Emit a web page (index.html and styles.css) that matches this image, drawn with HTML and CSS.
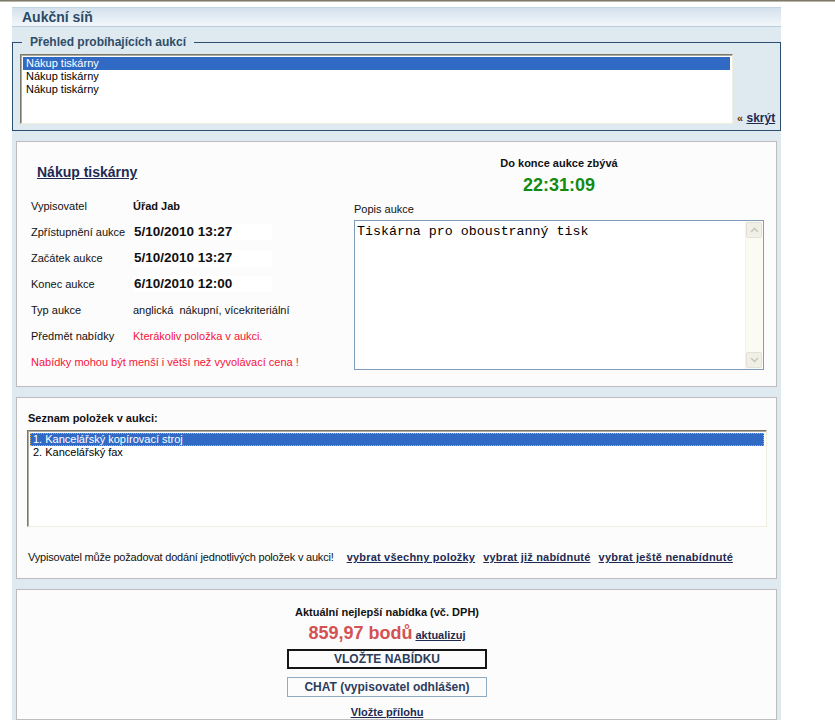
FILE: index.html
```html
<!DOCTYPE html>
<html lang="cs">
<head>
<meta charset="utf-8">
<title>Aukční síň</title>
<link rel="stylesheet" href="styles.css">
</head>
<body>
<div class="topline"></div>
<div class="page">
  <div class="header">Aukční síň</div>

  <fieldset class="overview">
    <legend>Přehled probíhajících aukcí</legend>
    <div class="overview-row">
      <div class="listbox auctions">
        <div class="item selected">Nákup tiskárny</div>
        <div class="item">Nákup tiskárny</div>
        <div class="item">Nákup tiskárny</div>
      </div>
      <div class="hide"><span class="raquo">«</span> <a href="#">skrýt</a></div>
    </div>
  </fieldset>

  <div class="panel detail">
    <div class="left">
      <a class="title" href="#">Nákup tiskárny</a>
      <div class="rows">
        <div class="row"><span class="label">Vypisovatel</span><span class="val strong">Úřad Jab</span></div>
        <div class="row"><span class="label">Zpřístupnění aukce</span><span class="val date">5/10/2010 13:27</span></div>
        <div class="row"><span class="label">Začátek aukce</span><span class="val date">5/10/2010 13:27</span></div>
        <div class="row"><span class="label">Konec aukce</span><span class="val date">6/10/2010 12:00</span></div>
        <div class="row"><span class="label">Typ aukce</span><span class="val">anglická&nbsp; nákupní, vícekriteriální</span></div>
        <div class="row"><span class="label">Předmět nabídky</span><span class="val red">Kterákoliv položka v aukci.</span></div>
        <div class="row red">Nabídky mohou být menší i větší než vyvolávací cena !</div>
      </div>
    </div>
    <div class="right">
      <div class="remain">Do konce aukce zbývá</div>
      <div class="countdown">22:31:09</div>
      <div class="popis">Popis aukce</div>
      <div class="textarea">
        <div class="ta-text">Tiskárna pro oboustranný tisk</div>
        <div class="scrollbar">
          <div class="sb-btn"><svg width="9" height="6" viewBox="0 0 9 6"><path d="M1 5 L4.5 1.5 L8 5" fill="none" stroke="#c9c9bd" stroke-width="1.6"/></svg></div>
          <div class="sb-track"></div>
          <div class="sb-btn"><svg width="9" height="6" viewBox="0 0 9 6"><path d="M1 1 L4.5 4.5 L8 1" fill="none" stroke="#c9c9bd" stroke-width="1.6"/></svg></div>
        </div>
      </div>
    </div>
  </div>

  <div class="panel items">
    <div class="items-head">Seznam položek v aukci:</div>
    <div class="listbox itemlist">
      <div class="item selected focus">1. Kancelářský kopírovací stroj</div>
      <div class="item">2. Kancelářský fax</div>
    </div>
    <div class="items-links">
      <span class="note">Vypisovatel může požadovat dodání jednotlivých položek v aukci!</span>
      <a href="#" class="first">vybrat všechny položky</a>
      <a href="#">vybrat již nabídnuté</a>
      <a href="#">vybrat ještě nenabídnuté</a>
    </div>
  </div>

  <div class="panel bid">
    <div class="bid-inner">
      <div class="best">Aktuální nejlepší nabídka (vč. DPH)</div>
      <div class="price"><span class="amount">859,97 bodů</span> <a href="#" class="refresh">aktualizuj</a></div>
      <div class="btn btn-main">VLOŽTE NABÍDKU</div>
      <div class="btn btn-chat">CHAT (vypisovatel odhlášen)</div>
      <a href="#" class="attach">Vložte přílohu</a>
    </div>
  </div>
</div>
</body>
</html>
```

FILE: styles.css
```css
html, body {
  margin: 0;
  padding: 0;
  background: #ffffff;
  font-family: "Liberation Sans", Arial, sans-serif;
  font-size: 11px;
  color: #111111;
}

a {
  color: #1e2a52;
  font-weight: bold;
  text-decoration: underline;
}

.topline {
  height: 1px;
  background: #7d7a6c;
  border-bottom: 1px solid #b9b6a8;
}

.page {
  margin: 5px 0 0 12px;
  width: 769px;
  background: #dfe9f0;
}

.header {
  height: 18px;
  line-height: 18px;
  border-top: 1px solid #c3d4e1;
  border-bottom: 1px solid #bacdda;
  background: linear-gradient(#d4e1ec, #f3f7fa);
  padding-left: 10px;
  font-size: 14px;
  font-weight: bold;
  color: #2b4a66;
}

/* overview fieldset */
.overview {
  margin: 8px 0 0 0;
  padding: 0 0 6px 0;
  border: 1px solid #2b4d6e;
  min-inline-size: 0;
}

.overview legend {
  margin-left: 9px;
  padding: 0 8px;
  font-size: 12px;
  line-height: 14px;
  font-weight: bold;
  color: #2e4d68;
}

.overview-row {
  display: flex;
  align-items: flex-end;
  margin-top: 5px;
  padding-left: 7px;
}

.listbox {
  box-sizing: border-box;
  background: #ffffff;
  border: 1px solid;
  border-color: #7a786b #efede0 #efede0 #7a786b;
  box-shadow: inset 1px 1px 0 #aeaca0;
  padding: 2px 2px 0 2px;
}

.auctions {
  width: 713px;
  height: 70px;
}

.item {
  height: 13px;
  line-height: 13px;
  padding-left: 3px;
  white-space: nowrap;
  font-size: 11px;
  color: #000;
}

.item.selected {
  background: #316ac5;
  color: #ffffff;
}

.item.focus {
  outline: 1px dotted #d6a84a;
  outline-offset: -1px;
}

.hide {
  margin-left: 4px;
  font-size: 12px;
  font-weight: bold;
  line-height: 14px;
  color: #5a3a10;
  margin-bottom: -1px;
}

.hide .raquo {
  font-size: 11px;
}

/* panels */
.panel {
  box-sizing: border-box;
  margin: 10px 0 0 4px;
  width: 761px;
  background: #fcfcfc;
  border: 1px solid #bdbdbd;
}

.detail {
  height: 246px;
  display: flex;
}

.detail .left {
  flex: 1;
  padding-left: 14px;
}

.detail .title {
  display: inline-block;
  margin: 21px 0 0 6px;
  font-size: 14px;
  line-height: 18px;
  color: #1e2a52;
}

.rows {
  margin-top: 12px;
}

.row {
  height: 26px;
  line-height: 26px;
  display: flex;
  align-items: center;
  white-space: nowrap;
}

.label {
  width: 102px;
  flex: none;
}

.val.strong {
  font-weight: bold;
}

.val.date {
  display: inline-block;
  width: 138px;
  height: 16px;
  line-height: 16px;
  padding-left: 1px;
  background: #ffffff;
  font-size: 13.5px;
  font-weight: bold;
}

.red {
  color: #f5133a;
}

.detail .right {
  width: 410px;
  margin-right: 12px;
}

.remain {
  margin-top: 14px;
  line-height: 14px;
  text-align: center;
  font-weight: bold;
}

.countdown {
  margin-top: 4px;
  line-height: 22px;
  text-align: center;
  font-size: 18px;
  font-weight: bold;
  color: #138a13;
}

.popis {
  margin-top: 6px;
  line-height: 14px;
}

.textarea {
  box-sizing: border-box;
  margin-top: 4px;
  height: 150px;
  border: 1px solid #7f9db9;
  background: #ffffff;
  display: flex;
}

.ta-text {
  flex: 1;
  padding: 3px 0 0 2px;
  font-family: "Liberation Mono", "Courier New", monospace;
  font-size: 13.3px;
  line-height: 16px;
  color: #000;
}

.scrollbar {
  width: 17px;
  display: flex;
  flex-direction: column;
  background: #fbfbf3;
  border-left: 1px solid #f4f3ea;
}

.sb-btn {
  box-sizing: border-box;
  width: 16px;
  height: 16px;
  margin: 1px 0 1px 0;
  border: 1px solid #e3e1d6;
  border-radius: 2px;
  background: #f1f0e8;
  display: flex;
  align-items: center;
  justify-content: center;
}

.sb-track {
  flex: 1;
}

/* items panel */
.items {
  height: 182px;
  padding-left: 10px;
}

.items-head {
  margin: 13px 0 0 1px;
  line-height: 14px;
  font-weight: bold;
}

.itemlist {
  margin-top: 5px;
  width: 740px;
  height: 97px;
}

.items-links {
  margin: 23px 0 0 1px;
  line-height: 14px;
  white-space: nowrap;
}

.items-links .note {
  letter-spacing: -0.2px;
}

.items-links a {
  margin-left: 5px;
  letter-spacing: 0.2px;
}

.items-links a.first {
  margin-left: 10px;
}

/* bid panel */
.bid {
  height: 131px;
}

.bid-inner {
  padding-right: 19px;
  display: flex;
  flex-direction: column;
  align-items: center;
}

.best {
  margin-top: 15px;
  line-height: 14px;
  font-weight: bold;
}

.price {
  margin-top: 3px;
  line-height: 22px;
}

.amount {
  font-size: 18px;
  font-weight: bold;
  color: #d35252;
}

.refresh {
  font-size: 11px;
}

.btn {
  box-sizing: border-box;
  width: 200px;
  height: 20px;
  text-align: center;
  font-size: 12px;
  font-weight: bold;
  color: #2c3d5c;
  background: #fcfcfc;
}

.btn-main {
  margin-top: 3px;
  border: 2px solid #151515;
  line-height: 16px;
}

.btn-chat {
  margin-top: 8px;
  border: 1px solid #8eabc4;
  line-height: 18px;
}

.attach {
  margin-top: 8px;
  line-height: 14px;
}
```
